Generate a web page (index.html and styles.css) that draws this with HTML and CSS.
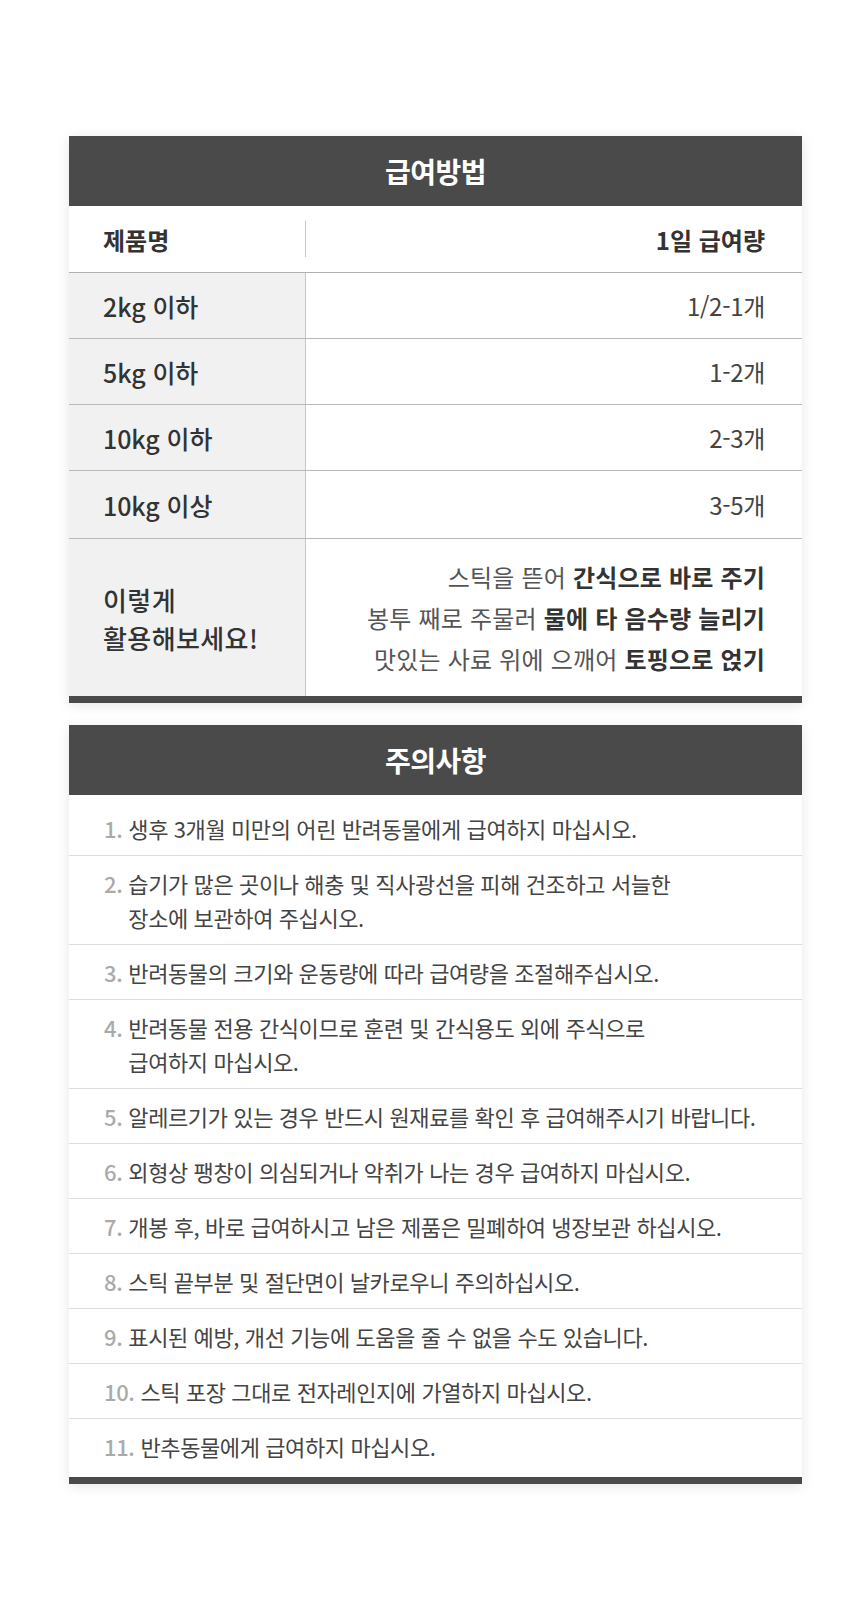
FILE: index.html
```html
<!DOCTYPE html>
<html lang="ko">
<head>
<meta charset="utf-8">
<title>급여방법 / 주의사항</title>
<link rel="stylesheet" href="styles.css">
</head>
<body>
<div class="page">
  <section class="card">
    <h2 class="card-title">급여방법</h2>
    <div class="feed">
      <div class="row row-head">
        <div class="cell cell-label"><span class="head-label">제품명</span></div>
        <div class="cell cell-value"><span class="head-value">1일 급여량</span></div>
      </div>
      <div class="row">
        <div class="cell cell-label">2kg 이하</div>
        <div class="cell cell-value">1/2-1개</div>
      </div>
      <div class="row">
        <div class="cell cell-label">5kg 이하</div>
        <div class="cell cell-value">1-2개</div>
      </div>
      <div class="row">
        <div class="cell cell-label">10kg 이하</div>
        <div class="cell cell-value">2-3개</div>
      </div>
      <div class="row row-last">
        <div class="cell cell-label">10kg 이상</div>
        <div class="cell cell-value">3-5개</div>
      </div>
      <div class="row row-usage">
        <div class="cell cell-label usage-label">이렇게<br>활용해보세요!</div>
        <div class="cell cell-value usage-value">
          <p>스틱을 뜯어 <b>간식으로 바로 주기</b></p>
          <p>봉투 째로 주물러 <b>물에 타 음수량 늘리기</b></p>
          <p>맛있는 사료 위에 으깨어 <b>토핑으로 얹기</b></p>
        </div>
      </div>
    </div>
  </section>

  <section class="card">
    <h2 class="card-title">주의사항</h2>
    <ol class="notes">
      <li><span class="num">1.</span><span class="txt">생후 3개월 미만의 어린 반려동물에게 급여하지 마십시오.</span></li>
      <li><span class="num">2.</span><span class="txt">습기가 많은 곳이나 해충 및 직사광선을 피해 건조하고 서늘한<br>장소에 보관하여 주십시오.</span></li>
      <li><span class="num">3.</span><span class="txt">반려동물의 크기와 운동량에 따라 급여량을 조절해주십시오.</span></li>
      <li><span class="num">4.</span><span class="txt">반려동물 전용 간식이므로 훈련 및 간식용도 외에 주식으로<br>급여하지 마십시오.</span></li>
      <li><span class="num">5.</span><span class="txt">알레르기가 있는 경우 반드시 원재료를 확인 후 급여해주시기 바랍니다.</span></li>
      <li><span class="num">6.</span><span class="txt">외형상 팽창이 의심되거나 악취가 나는 경우 급여하지 마십시오.</span></li>
      <li><span class="num">7.</span><span class="txt">개봉 후, 바로 급여하시고 남은 제품은 밀폐하여 냉장보관 하십시오.</span></li>
      <li><span class="num">8.</span><span class="txt">스틱 끝부분 및 절단면이 날카로우니 주의하십시오.</span></li>
      <li><span class="num">9.</span><span class="txt">표시된 예방, 개선 기능에 도움을 줄 수 없을 수도 있습니다.</span></li>
      <li><span class="num">10.</span><span class="txt">스틱 포장 그대로 전자레인지에 가열하지 마십시오.</span></li>
      <li><span class="num">11.</span><span class="txt">반추동물에게 급여하지 마십시오.</span></li>
    </ol>
  </section>
</div>
</body>
</html>
```

FILE: styles.css
```css
* { box-sizing: border-box; }

html, body {
  margin: 0;
  padding: 0;
  background: #ffffff;
}

body {
  font-family: "Noto Sans CJK KR", "Noto Sans", sans-serif;
  color: #444444;
}

.page {
  padding: 136px 58px 136px 69px;
  display: flex;
  flex-direction: column;
  gap: 22px;
}

.card {
  background: #ffffff;
  box-shadow: 0 2px 12px rgba(0, 0, 0, 0.10);
  border-bottom: 7px solid #4a4a4a;
}

.card-title {
  margin: 0;
  height: 70px;
  background: #4a4a4a;
  color: #ffffff;
  font-size: 28px;
  font-weight: 700;
  letter-spacing: -0.5px;
  display: flex;
  align-items: center;
  justify-content: center;
}

/* ---------- feeding table ---------- */
.feed {
  display: flex;
  flex-direction: column;
}

.row {
  display: grid;
  grid-template-columns: 237px 1fr;
  height: 66px;
  border-bottom: 1px solid #b9b9b9;
  font-size: 24px;
  letter-spacing: -0.3px;
}

.cell {
  display: flex;
  align-items: center;
}

.cell-label {
  background: #f1f1f1;
  border-right: 1px solid #c6c6c6;
  padding-left: 34px;
  color: #333333;
  font-size: 25px;
  letter-spacing: -0.1px;
  font-weight: 500;
}

.cell-value {
  justify-content: flex-end;
  padding-right: 37px;
  color: #444444;
}

.row-head {
  height: 67px;
  border-bottom-color: #b0b0b0;
}

.row-head .cell-label {
  background: #ffffff;
  border-right: none;
  position: relative;
}

.row-head .cell-label::after {
  content: "";
  position: absolute;
  right: 0;
  top: 15px;
  bottom: 15px;
  width: 1px;
  background: #c6c6c6;
}

.head-label,
.head-value {
  font-weight: 700;
  color: #333333;
  font-size: 24px;
  letter-spacing: 0;
}

.row-last {
  height: 68px;
}

.row-usage {
  height: 157px;
  border-bottom: none;
}

.usage-label {
  font-size: 26px;
  letter-spacing: 0.4px;
  line-height: 38px;
  padding-top: 2px;
}

.usage-value {
  flex-direction: column;
  align-items: flex-end;
  justify-content: center;
  color: #555555;
  letter-spacing: 0.2px;
}

.usage-value p {
  margin: 0;
  line-height: 41px;
}

.usage-value b {
  font-weight: 700;
  color: #333333;
}

/* ---------- notes ---------- */
.notes {
  list-style: none;
  margin: 0;
  padding: 6px 0 4px;
}

.notes li {
  display: flex;
  padding: 10px 20px 10px 35px;
  border-bottom: 1px solid #dddddd;
  font-size: 22px;
  line-height: 34px;
  letter-spacing: -0.4px;
  color: #444444;
}

.notes li:last-child {
  border-bottom: none;
}

.notes .num {
  color: #aaaaaa;
  font-weight: 500;
  margin-right: 6px;
  flex: none;
}
```
